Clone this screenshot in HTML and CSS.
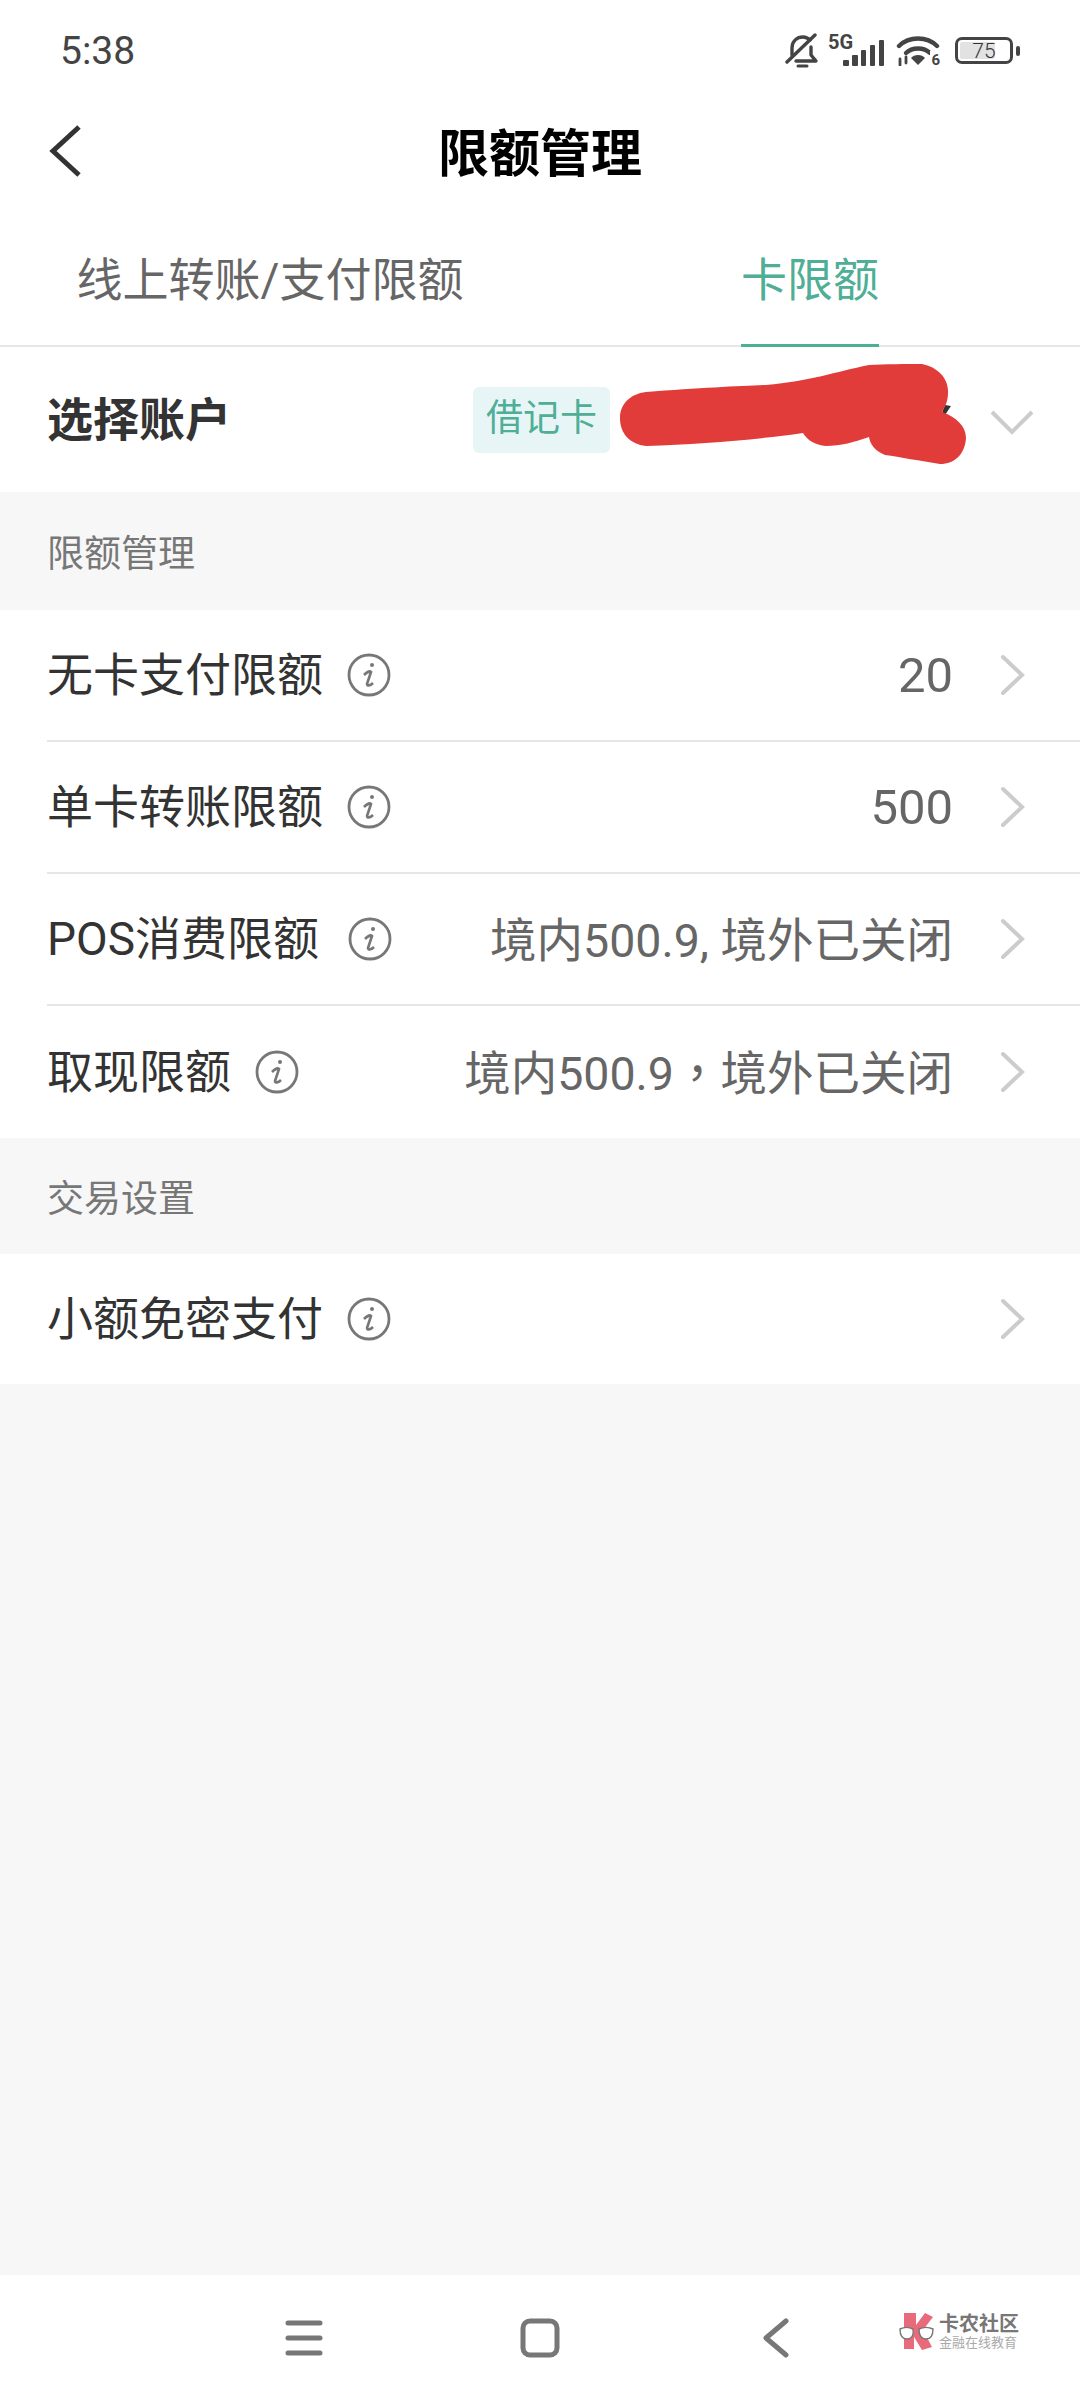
FILE: index.html
```html
<!DOCTYPE html>
<html lang="zh-CN">
<head>
    <meta charset="UTF-8">
    <meta name="viewport" content="width=device-width, initial-scale=1.0">
    <title>限额管理</title>
    <link rel="stylesheet" href="styles.css">
</head>
<body>
<div class="app">
    <div class="status-bar">
        <span class="time">5:38</span>
        <div class="status-icons">
            <svg class="icon-bell" width="34" height="36" viewBox="0 0 34 36" fill="none" stroke="#444" stroke-width="3.4" stroke-linecap="round" stroke-linejoin="round">
                <path d="M7 22V15C7 8 12 4 18 4c3 0 5 1 7 3"/>
                <path d="M26 14v8l5 6H11"/>
                <path d="M30 2L2 29"/>
                <path d="M13 33h9" stroke-width="3"/>
            </svg>
            <div class="network">
                <span class="network-type">5G</span>
                <svg width="42" height="26" viewBox="0 0 42 26" fill="#444">
                    <rect x="0" y="20" width="6" height="6" rx="1"/>
                    <rect x="9" y="15" width="6" height="11" rx="1"/>
                    <rect x="18" y="10" width="5" height="16" rx="1"/>
                    <rect x="27" y="5" width="5" height="21" rx="1"/>
                    <rect x="36" y="0" width="5" height="26" rx="1"/>
                </svg>
            </div>
            <div class="wifi">
                <svg width="44" height="30" viewBox="0 0 44 30" fill="none" stroke="#444" stroke-width="4.4" stroke-linecap="round">
                    <path d="M3 10C13 0 31 0 41 10"/>
                    <path d="M10 17C16 11 28 11 34 17"/>
                    <path d="M22 29l-7-7c3-4 11-4 14 0z" fill="#444" stroke="none"/>
                    <path d="M4 23v6M10 21v6" stroke-width="2.8"/>
                </svg>
                <span class="wifi-six">6</span>
            </div>
            <div class="battery">
                <div class="battery-body"><div class="battery-level"></div><span class="battery-text">75</span></div>
                <div class="battery-tip"></div>
            </div>
        </div>
    </div>

    <div class="header">
        <svg class="header-back" width="34" height="52" viewBox="0 0 34 52" fill="none" stroke="#333" stroke-width="5">
            <path d="M31 2L5 26l26 24"/>
        </svg>
        <h1 class="header-title">限额管理</h1>
    </div>

    <div class="tabs">
        <div class="tab"><span class="tab-text">线上转账/支付限额</span></div>
        <div class="tab"><span class="tab-text is-active">卡限额</span></div>
    </div>

    <div class="account">
        <span class="account-label">选择账户</span>
        <span class="account-type">借记卡</span>
        <svg class="chevron-down" width="46" height="26" viewBox="0 0 46 26" fill="none" stroke="#ccc" stroke-width="4">
            <path d="M3 3l20 20L43 3"/>
        </svg>
        <svg class="scribble" width="360" height="110" viewBox="0 0 360 110">
            <path d="M331 42l-6 9-5 3 5-13z" fill="#333"/>
            <path d="M26 28C80 24 120 22 146 21C190 17 215 8 249 1C265 0 285 0 302 0C318 3 329 15 328 29C328 37 325 43 322 48C336 53 346 62 346 74C345 90 335 100 320 100C300 97 280 93 265 91C255 87 250 80 249 73C235 78 220 82 206 82C195 81 187 76 183 69C135 76 80 80 26 82C10 80 0 70 0 54C0 40 10 30 26 28z" fill="#e13c3a"/>
        </svg>
    </div>

    <div class="section-title">限额管理</div>
    <div class="list">
        <div class="row">
            <span class="row-label">无卡支付限额</span>
            <svg class="info" width="44" height="44" viewBox="0 0 44 44" fill="none" stroke="#777" stroke-width="2.8"><circle cx="22" cy="22" r="20"/><path d="M17 22c3-3 6-4 7-3l-4 12c0 2 3 2 6-1" stroke-width="2.6"/><circle cx="25" cy="12" r="2" fill="#777" stroke="none"/></svg>
            <span class="row-value row-number">20</span>
            <svg class="chevron-right" width="26" height="42" viewBox="0 0 26 42" fill="none" stroke="#ccc" stroke-width="4" stroke-linecap="round"><path d="M3 3l19 18L3 39"/></svg>
        </div>
        <div class="row">
            <span class="row-label">单卡转账限额</span>
            <svg class="info" width="44" height="44" viewBox="0 0 44 44" fill="none" stroke="#777" stroke-width="2.8"><circle cx="22" cy="22" r="20"/><path d="M17 22c3-3 6-4 7-3l-4 12c0 2 3 2 6-1" stroke-width="2.6"/><circle cx="25" cy="12" r="2" fill="#777" stroke="none"/></svg>
            <span class="row-value row-number">500</span>
            <svg class="chevron-right" width="26" height="42" viewBox="0 0 26 42" fill="none" stroke="#ccc" stroke-width="4" stroke-linecap="round"><path d="M3 3l19 18L3 39"/></svg>
        </div>
        <div class="row">
            <span class="row-label">POS消费限额</span>
            <svg class="info info-wide" width="44" height="44" viewBox="0 0 44 44" fill="none" stroke="#777" stroke-width="2.8"><circle cx="22" cy="22" r="20"/><path d="M17 22c3-3 6-4 7-3l-4 12c0 2 3 2 6-1" stroke-width="2.6"/><circle cx="25" cy="12" r="2" fill="#777" stroke="none"/></svg>
            <span class="row-value row-value-text">境内500.9, 境外已关闭</span>
            <svg class="chevron-right" width="26" height="42" viewBox="0 0 26 42" fill="none" stroke="#ccc" stroke-width="4" stroke-linecap="round"><path d="M3 3l19 18L3 39"/></svg>
        </div>
        <div class="row row-last">
            <span class="row-label">取现限额</span>
            <svg class="info" width="44" height="44" viewBox="0 0 44 44" fill="none" stroke="#777" stroke-width="2.8"><circle cx="22" cy="22" r="20"/><path d="M17 22c3-3 6-4 7-3l-4 12c0 2 3 2 6-1" stroke-width="2.6"/><circle cx="25" cy="12" r="2" fill="#777" stroke="none"/></svg>
            <span class="row-value row-value-text">境内500.9<span class="comma" lang="zh-TW">，</span>境外已关闭</span>
            <svg class="chevron-right" width="26" height="42" viewBox="0 0 26 42" fill="none" stroke="#ccc" stroke-width="4" stroke-linecap="round"><path d="M3 3l19 18L3 39"/></svg>
        </div>
    </div>

    <div class="section-title section-title-short">交易设置</div>
    <div class="list">
        <div class="row row-last row-short">
            <span class="row-label">小额免密支付</span>
            <svg class="info" width="44" height="44" viewBox="0 0 44 44" fill="none" stroke="#777" stroke-width="2.8"><circle cx="22" cy="22" r="20"/><path d="M17 22c3-3 6-4 7-3l-4 12c0 2 3 2 6-1" stroke-width="2.6"/><circle cx="25" cy="12" r="2" fill="#777" stroke="none"/></svg>
            <svg class="chevron-right" width="26" height="42" viewBox="0 0 26 42" fill="none" stroke="#ccc" stroke-width="4" stroke-linecap="round"><path d="M3 3l19 18L3 39"/></svg>
        </div>
    </div>

    <div class="spacer"></div>

    <div class="nav-bar">
        <div class="nav-item">
            <svg width="38" height="38" viewBox="0 0 38 38" fill="none" stroke="#777" stroke-width="5" stroke-linecap="round"><path d="M3 4h32M3 19h32M3 34h32"/></svg>
        </div>
        <div class="nav-item">
            <svg width="40" height="40" viewBox="0 0 40 40" fill="none" stroke="#777" stroke-width="5"><rect x="3" y="3" width="34" height="34" rx="7"/></svg>
        </div>
        <div class="nav-item">
            <svg width="28" height="40" viewBox="0 0 28 40" fill="none" stroke="#777" stroke-width="5" stroke-linecap="round" stroke-linejoin="round"><path d="M24 3L4 20l20 17"/></svg>
        </div>
        <div class="watermark">
            <svg width="38" height="38" viewBox="0 0 38 38">
                <path d="M5 1h12v12l9-12 8 4-10 13 9 17-10 3-8-13v12H5z" fill="#e96a7a"/>
                <path d="M1 17c4-2 9-2 13 0 1 6-1 10-6 10s-7-4-7-10zM20 17c4-2 10-2 14 0 0 6-2 10-7 10s-7-4-7-10z" fill="#fff" stroke="#777" stroke-width="1.4"/>
            </svg>
            <div class="watermark-text">
                <span class="watermark-name">卡农社区</span>
                <span class="watermark-sub">金融在线教育</span>
            </div>
        </div>
    </div>
</div>
</body>
</html>
```

FILE: styles.css
```css
body{
    margin: 0;
    font-family: Roboto, "Noto Sans CJK SC", sans-serif;
    background-color: #f7f7f7;
}

.app{
    width: 1080px;
    height: 2400px;
    display: flex;
    flex-direction: column;
    overflow: hidden;
}

/* status bar */
.status-bar{
    height: 101px;
    padding: 0 60px;
    display: flex;
    justify-content: space-between;
    align-items: center;
    background-color: white;
    box-sizing: border-box;
}
.time{
    font-size: 39px;
    color: #444;
}
.status-icons{
    display: flex;
    align-items: center;
}
.icon-bell{
    margin-right: 9px;
}
.network{
    width: 57px;
    height: 30px;
    position: relative;
    display: flex;
    justify-content: flex-end;
    align-items: flex-end;
}
.network-type{
    position: absolute;
    left: 0;
    top: -6px;
    font-size: 20px;
    font-weight: bold;
    color: #444;
}
.wifi{
    position: relative;
    margin-left: 11px;
    height: 30px;
}
.wifi-six{
    position: absolute;
    right: 0;
    bottom: -3px;
    font-size: 15px;
    font-weight: bold;
    color: #444;
    background-color: white;
    padding-left: 1px;
}
.battery{
    display: flex;
    align-items: center;
    margin-left: 15px;
}
.battery-body{
    width: 58px;
    height: 27px;
    border: 3px solid #444;
    border-radius: 7px;
    box-sizing: border-box;
    display: flex;
    align-items: center;
    justify-content: center;
    position: relative;
    padding: 2px;
}
.battery-level{
    position: absolute;
    left: 2px;
    top: 2px;
    bottom: 2px;
    width: 35px;
    background-color: #e2e2e2;
    border-radius: 2px;
}
.battery-text{
    position: relative;
    font-size: 21px;
    font-weight: 300;
    color: #333;
}
.battery-tip{
    width: 4px;
    height: 10px;
    margin-left: 3px;
    background-color: #444;
    border-radius: 2px;
}

/* title */
.header{
    height: 100px;
    padding-left: 48px;
    display: flex;
    align-items: center;
    position: relative;
    background-color: white;
}
.header-title{
    position: absolute;
    left: 0;
    right: 0;
    top: 12px;
    margin: 0;
    text-align: center;
    font-size: 51px;
    font-weight: bold;
    color: black;
}

/* tabs */
.tabs{
    height: 146px;
    display: flex;
    background-color: white;
    border-bottom: 2px solid #e6e6e6;
    box-sizing: border-box;
}
.tab{
    flex: 1;
    display: flex;
    justify-content: center;
}
.tab-text{
    height: 146px;
    line-height: 158px;
    font-size: 46px;
    color: #666;
    box-sizing: border-box;
}
.is-active{
    color: #4fae96;
    border-bottom: 3px solid #4fae96;
}

/* account */
.account{
    height: 145px;
    padding: 0 45px 0 47px;
    display: flex;
    align-items: center;
    position: relative;
    background-color: white;
}
.account-label{
    margin-bottom: 8px;
    font-size: 46px;
    font-weight: bold;
    color: #333;
}
.account-type{
    margin-left: 242px;
    padding: 0 13px;
    height: 66px;
    line-height: 64px;
    font-size: 37px;
    color: #4fae96;
    background-color: #e8f5f6;
    border-radius: 6px;
}
.chevron-down{
    margin-left: auto;
    margin-top: 4px;
}
.scribble{
    position: absolute;
    left: 620px;
    top: 17px;
}

/* list */
.section-title{
    height: 118px;
    padding-left: 47px;
    display: flex;
    align-items: center;
    font-size: 37px;
    color: #777;
}
.section-title-short{
    height: 116px;
}
.list{
    background-color: white;
}
.row{
    height: 132px;
    margin-left: 47px;
    padding-right: 54px;
    display: flex;
    align-items: center;
    border-bottom: 2px solid #e6e6e6;
    box-sizing: border-box;
}
.row-last{
    border-bottom: none;
}
.row-short{
    height: 130px;
}
.row-label{
    margin-bottom: 8px;
    font-size: 46px;
    color: #333;
}
.info{
    margin-left: 24px;
}
.info-wide{
    margin-left: 29px;
}
.row-value{
    margin-left: auto;
    font-size: 46.5px;
    color: #666;
    white-space: nowrap;
}
.row-number{
    font-size: 49px;
}
.row-value-text{
    margin-bottom: 5px;
}
.comma{
    font-family: "Noto Sans CJK TC", sans-serif;
}
.chevron-right{
    margin-left: 47px;
}
.row-last .info + .chevron-right{
    margin-left: auto;
}

.spacer{
    flex: 1;
}

/* nav */
.nav-bar{
    height: 125px;
    display: flex;
    justify-content: center;
    align-items: center;
    position: relative;
    background-color: white;
}
.nav-item{
    width: 236px;
    display: flex;
    justify-content: center;
}
.watermark{
    position: absolute;
    left: 899px;
    top: 37px;
    display: flex;
    align-items: center;
    gap: 2px;
}
.watermark-text{
    display: flex;
    flex-direction: column;
}
.watermark-name{
    font-size: 20px;
    line-height: 22px;
    font-weight: bold;
    color: #777;
}
.watermark-sub{
    font-size: 13px;
    line-height: 15px;
    color: #aaa;
}
```
